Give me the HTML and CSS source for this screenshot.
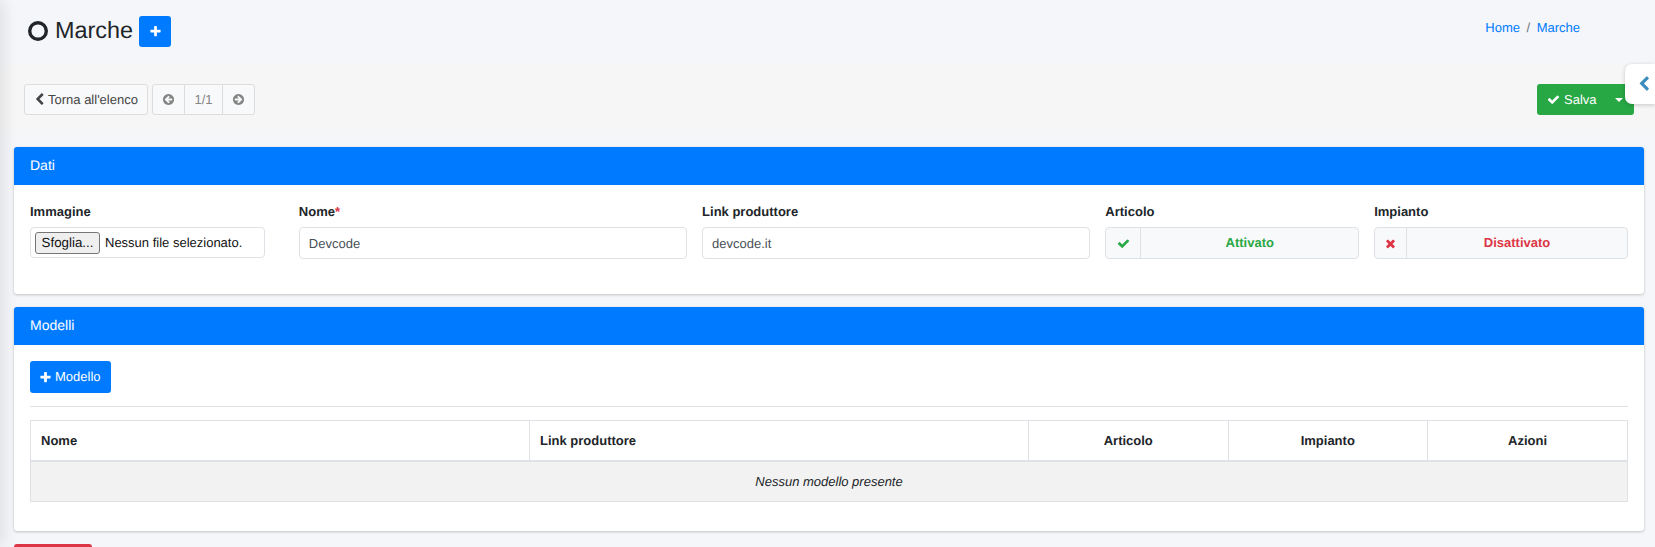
FILE: index.html
```html
<!DOCTYPE html>
<html lang="it">
<head>
<meta charset="utf-8">
<title>Marche</title>
<link rel="stylesheet" href="styles.css">
</head>
<body>
<svg class="defs" width="0" height="0" aria-hidden="true">
  <symbol id="i-check" viewBox="0 0 1792 1792"><path d="M1671 566q0 40-28 68l-724 724-136 136q-28 28-68 28t-68-28l-136-136-362-362q-28-28-28-68t28-68l136-136q28-28 68-28t68 28l294 295 656-657q28-28 68-28t68 28l136 136q28 28 28 68z"/></symbol>
  <symbol id="i-times" viewBox="0 0 1792 1792"><path d="M1490 1322q0 40-28 68l-136 136q-28 28-68 28t-68-28l-294-294-294 294q-28 28-68 28t-68-28l-136-136q-28-28-28-68t28-68l294-294-294-294q-28-28-28-68t28-68l136-136q28-28 68-28t68 28l294 294 294-294q28-28 68-28t68 28l136 136q28 28 28 68t-28 68l-294 294 294 294q28 28 28 68z"/></symbol>
  <symbol id="i-plus" viewBox="0 0 1792 1792"><path d="M1600 736v192q0 40-28 68t-68 28h-416v416q0 40-28 68t-68 28h-192q-40 0-68-28t-28-68v-416h-416q-40 0-68-28t-28-68v-192q0-40 28-68t68-28h416v-416q0-40 28-68t68-28h192q40 0 68 28t28 68v416h416q40 0 68 28t28 68z"/></symbol>
  <symbol id="i-chevron" viewBox="0 0 1792 1792"><path d="M1427 301l-531 531 531 531q19 19 19 45t-19 45l-166 166q-19 19-45 19t-45-19l-742-742q-19-19-19-45t19-45l742-742q19-19 45-19t45 19l166 166q19 19 19 45t-19 45z"/></symbol>
  <symbol id="i-arrow-left" viewBox="0 0 1792 1792"><path fill-rule="evenodd" d="M1408 960v-128q0-26-19-45t-45-19h-502l189-189q19-19 19-45t-19-45l-91-91q-18-18-45-18t-45 18l-362 362-91 91q-18 18-18 45t18 45l91 91 362 362q18 18 45 18t45-18l91-91q18-18 18-45t-18-45l-189-189h502q26 0 45-19t19-45zm256-64q0 209-103 385.500t-279.500 279.500-385.500 103-385.500-103-279.500-279.500-103-385.500 103-385.500 279.500-279.500 385.500-103 385.500 103 279.500 279.500 103 385.500z"/></symbol>
</svg>

<div class="page">
  <header class="title-row">
    <div class="title">
      <svg class="title-icon" viewBox="0 0 20 20"><circle cx="10" cy="10" r="8.3"/></svg>
      <h1>Marche</h1>
      <button class="btn btn-primary btn-add" type="button"><svg class="ico ico-13"><use href="#i-plus"/></svg></button>
    </div>
    <nav class="breadcrumb"><a href="#">Home</a><span class="sep">/</span><a href="#">Marche</a></nav>
  </header>

  <div class="toolbar">
    <div class="toolbar-left">
      <button class="btn btn-light" type="button"><svg class="ico ico-13"><use href="#i-chevron"/></svg>Torna all'elenco</button>
      <div class="pager">
        <span class="pager-item pager-prev"><svg class="ico ico-13"><use href="#i-arrow-left"/></svg></span>
        <span class="pager-item pager-num">1/1</span>
        <span class="pager-item pager-next"><svg class="ico ico-13 flip"><use href="#i-arrow-left"/></svg></span>
      </div>
    </div>
    <button class="btn btn-success btn-save" type="button"><svg class="ico ico-13"><use href="#i-check"/></svg>Salva<span class="caret"></span></button>
  </div>

  <section class="card card-dati">
    <div class="card-header">Dati</div>
    <div class="card-body">
      <div class="form-grid">
        <div class="field span-2">
          <label>Immagine</label>
          <div class="file-input"><span class="file-btn">Sfoglia...</span><span class="file-name">Nessun file selezionato.</span></div>
        </div>
        <div class="field span-3">
          <label>Nome<span class="req">*</span></label>
          <div class="input">Devcode</div>
        </div>
        <div class="field span-3">
          <label>Link produttore</label>
          <div class="input">devcode.it</div>
        </div>
        <div class="field span-2">
          <label>Articolo</label>
          <div class="toggle toggle-on">
            <span class="toggle-icon toggle-icon-a"><svg class="ico ico-13"><use href="#i-check"/></svg></span>
            <span class="toggle-text">Attivato</span>
          </div>
        </div>
        <div class="field span-2">
          <label>Impianto</label>
          <div class="toggle toggle-off">
            <span class="toggle-icon toggle-icon-b"><svg class="ico ico-13"><use href="#i-times"/></svg></span>
            <span class="toggle-text">Disattivato</span>
          </div>
        </div>
      </div>
    </div>
  </section>

  <section class="card card-modelli">
    <div class="card-header">Modelli</div>
    <div class="card-body">
      <button class="btn btn-primary btn-model" type="button"><svg class="ico ico-13"><use href="#i-plus"/></svg>Modello</button>
      <hr class="divider">
      <table class="table">
        <thead>
          <tr>
            <th>Nome</th>
            <th>Link produttore</th>
            <th class="col-center">Articolo</th>
            <th class="col-center">Impianto</th>
            <th class="col-center col-last">Azioni</th>
          </tr>
        </thead>
        <tbody>
          <tr><td colspan="5" class="empty">Nessun modello presente</td></tr>
        </tbody>
      </table>
    </div>
  </section>

  <div class="btn-danger-bar" aria-hidden="true"></div>
</div>

<a class="sidebar-toggle" href="#"><svg class="ico ico-16"><use href="#i-chevron"/></svg></a>
</body>
</html>
```

FILE: styles.css
```css
* { box-sizing: border-box; }

html, body { margin: 0; height: 547px; overflow: hidden; }

body {
  background: #f4f6f9;
  color: #212529;
  font-family: "Liberation Sans", Arial, sans-serif;
  font-size: 13px;
  line-height: 18px;
  position: relative;
  text-rendering: geometricPrecision;
}

body::before {
  content: "";
  position: absolute;
  left: -6px;
  top: 0;
  width: 6px;
  height: 100%;
  box-shadow: 0 0 16px rgba(0, 0, 0, .22);
}

.defs { position: absolute; }

.page { padding: 16px 11px 0 14px; }

.ico { display: block; fill: currentColor; flex: none; }
.ico-13 { width: 13px; height: 13px; }
.ico-16 { width: 16px; height: 16px; }
.flip { transform: scaleX(-1); }

a { color: #007bff; text-decoration: none; }

.btn {
  display: inline-flex;
  align-items: center;
  height: 31px;
  padding: 0 8px;
  gap: 2px;
  border: 1px solid transparent;
  border-radius: 3px;
  font: inherit;
  text-rendering: inherit;
  white-space: nowrap;
}

.btn-primary { background: #007bff; color: #fff; }
.btn-success { background: #28a745; color: #fff; }
.btn-light { background: #f8f9fa; border-color: #ddd; color: #444; }

.btn-danger-bar {
  width: 78px;
  height: 32px;
  margin-top: 13px;
  border-radius: 3px;
  background: #dc3545;
}

.title-row { display: flex; justify-content: space-between; align-items: flex-start; }

.title { display: flex; align-items: center; padding-left: 14px; }

.title-icon {
  width: 20px;
  height: 20px;
  fill: none;
  stroke: #212529;
  stroke-width: 3.4;
  margin: -2px 7px 0 0;
}

h1 { margin: -2px 0 0; font-size: 23.4px; line-height: 31px; font-weight: 400; }

.btn-add { width: 32px; justify-content: center; padding: 0; margin-left: 6px; }

.breadcrumb { display: flex; padding-top: 3px; padding-right: 64px; }
.breadcrumb .sep { margin: 0 6.5px; color: #6c757d; }

.toolbar {
  display: flex;
  justify-content: space-between;
  margin: 21px -11px 0 -14px;
  padding: 16px 21px 16px 24px;
  background: #f6f6f7;
  box-shadow: 0 0 14px 4px #f6f6f7;
}

.toolbar-left { display: flex; gap: 4px; }

.toolbar-left .btn { width: 124px; }

.pager {
  display: flex;
  width: 103px;
  height: 31px;
  border: 1px solid #ddd;
  border-radius: 3px;
  background: #f8f9fa;
  color: #858585;
}

.pager-item { display: flex; align-items: center; justify-content: center; }
.pager-prev, .pager-next { flex: 1; }
.pager-num { width: 39px; border-left: 1px solid #ddd; border-right: 1px solid #ddd; }

.btn-save { width: 97px; padding-left: 9px; gap: 4px; position: relative; }

.caret {
  position: absolute;
  right: 10px;
  top: 13px;
  border-left: 4px solid transparent;
  border-right: 4px solid transparent;
  border-top: 4px solid #fff;
}

.card {
  position: relative;
  background: #fff;
  border-radius: 3px;
  box-shadow: 0 0 1px rgba(0, 0, 0, .13), 0 1px 3px rgba(0, 0, 0, .2);
  overflow: hidden;
}

.card-dati { margin-top: 16px; height: 147px; }
.card-modelli { margin-top: 13px; height: 224px; }

.card-header {
  background: #007bff;
  color: #fff;
  height: 38px;
  padding: 0 16px;
  font-size: 14px;
  line-height: 37px;
}

.card-body { padding: 16px; }

.form-grid { display: grid; grid-template-columns: repeat(12, 1fr); column-gap: 15px; }

.span-2 { grid-column: span 2; }
.span-3 { grid-column: span 3; }

.field label { display: block; font-weight: 700; line-height: 20px; margin: 1px 0 5px; }
.req { color: #dc3545; }

.input {
  height: 32px;
  padding: 0 10px;
  border: 1px solid #dee2e6;
  border-radius: 4px;
  background: #fff;
  color: #495057;
  line-height: 31px;
  text-indent: -1px;
}

.file-input {
  display: flex;
  align-items: center;
  width: 235px;
  height: 31px;
  padding: 1px 0 0 4px;
  border: 1px solid #dee2e6;
  border-radius: 4px;
  color: #111;
  line-height: 18px;
}

.file-btn {
  height: 22px;
  width: 65px;
  border: 1px solid #767676;
  border-radius: 3px;
  background: #efeff0;
  font-size: 13.33px;
  text-align: center;
  line-height: 20px;
  margin-right: 5px;
}

.toggle {
  display: flex;
  height: 32px;
  border: 1px solid #dee2e6;
  border-radius: 4px;
  background: #f8f9fa;
  font-weight: 700;
  line-height: 30px;
}

.toggle-icon { display: flex; align-items: center; justify-content: center; border-right: 1px solid #dee2e6; }
.toggle-icon-a { width: 35px; }
.toggle-icon-b { width: 32px; }
.toggle-text { flex: 1; text-align: center; }
.toggle-on { color: #28a745; }
.toggle-off { color: #dc3545; }

.btn-model { width: 81px; height: 32px; gap: 3px; }

.divider { border: 0; border-top: 1px solid #dee2e6; margin: 13px 0; }

.table { width: 100%; border-collapse: collapse; table-layout: fixed; }

.table th, .table td { border: 1px solid #dee2e6; padding: 0 10px; }

.table th { height: 40px; padding-top: 1px; text-align: left; border-bottom-width: 2px; }
.table th.col-center { text-align: center; width: 199.5px; }
.table th.col-last { width: 200px; }

.table td.empty { height: 41px; padding-top: 1px; background: #f2f2f2; text-align: center; font-style: italic; }

.sidebar-toggle {
  position: absolute;
  top: 64px;
  right: 0;
  width: 30px;
  height: 40px;
  display: flex;
  align-items: center;
  justify-content: flex-end;
  padding-right: 3px;
  background: #fff;
  border-radius: 7px 0 0 7px;
  box-shadow: 0 1px 4px rgba(0, 0, 0, .2);
  color: #3c8dbc;
}
```
